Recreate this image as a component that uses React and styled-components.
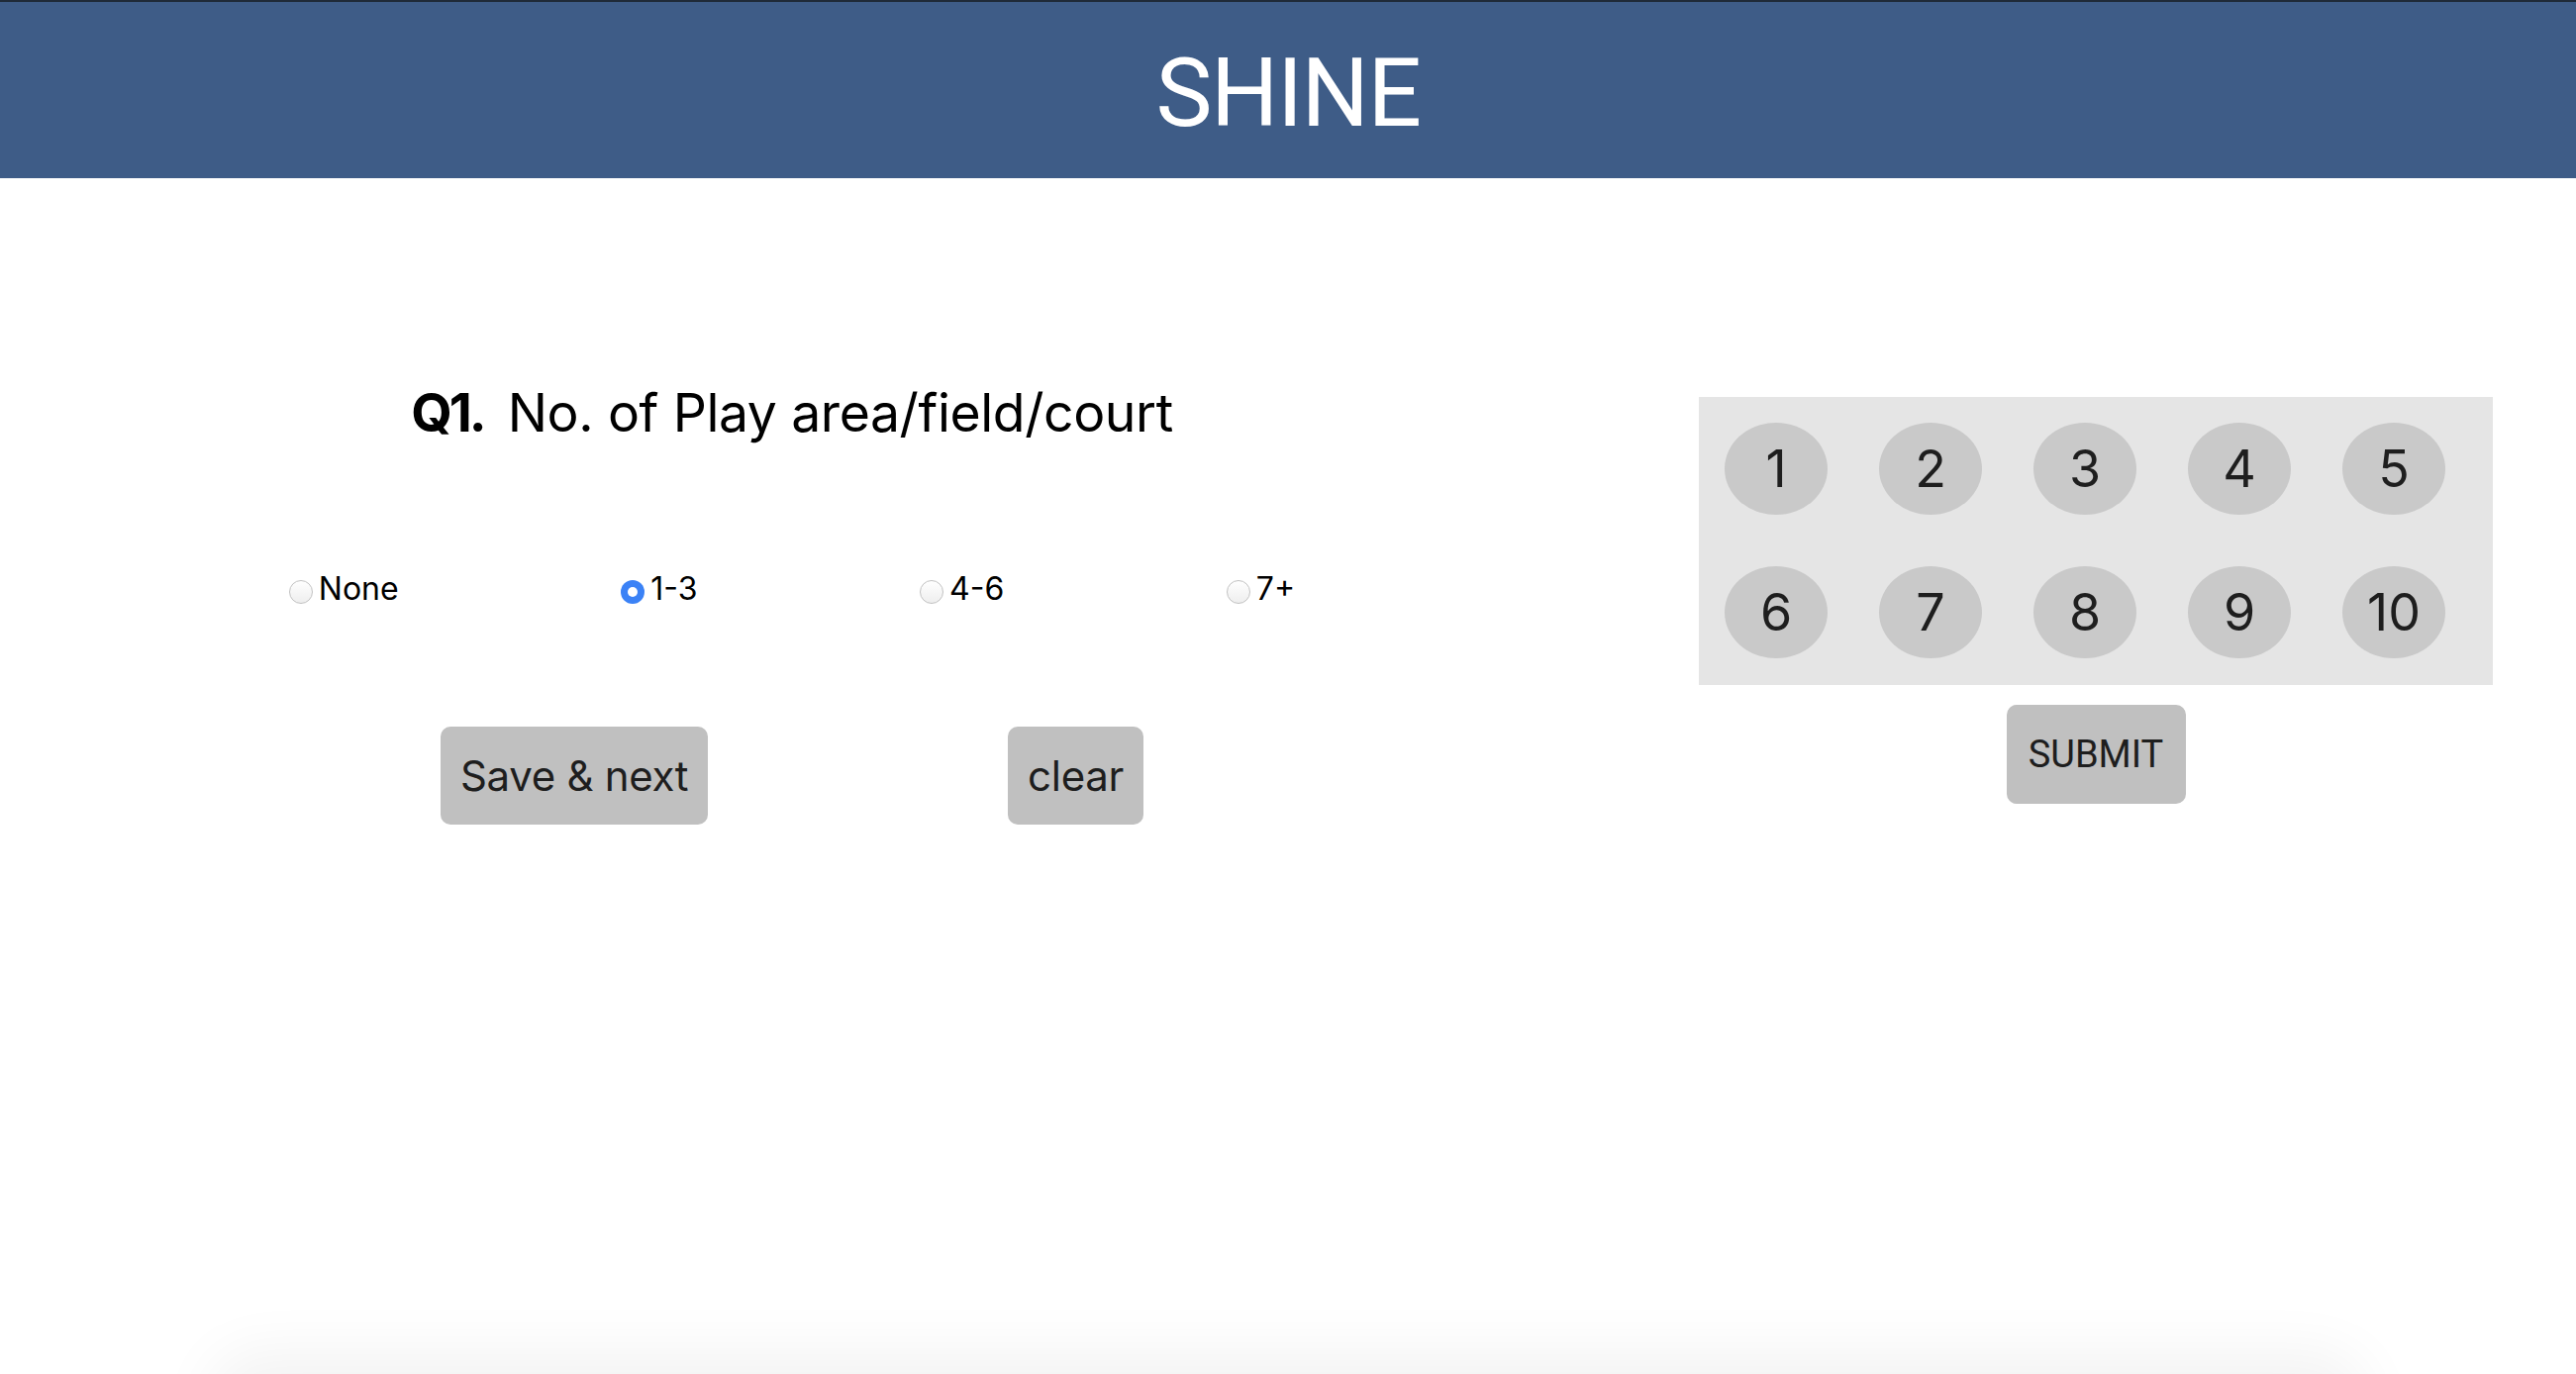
import React, { useState } from 'react'
import styled, { createGlobalStyle } from 'styled-components'

const GlobalStyle = createGlobalStyle`
  html, body {
    margin: 0;
    padding: 0;
    background: #ffffff;
    font-family: Inter, "Open Sans", sans-serif;
    color: #000;
    overflow: hidden;
  }
`

const Page = styled.div`
  width: 2602px;
`

const Header = styled.header`
  height: 178px;
  border-top: 2px solid #1f2a38;
  background: #3e5c87;
  display: flex;
  align-items: center;
  justify-content: center;
`

const Title = styled.h1`
  margin: 6px 0 0;
  font-family: Roboto, "Liberation Sans", sans-serif;
  font-weight: 400;
  font-size: 96px;
  line-height: 1;
  color: #ffffff;
  letter-spacing: -1.5px;
`

const Main = styled.main`
  height: 1215px;
  display: flex;
  align-items: flex-start;
`

const QuestionColumn = styled.section`
  width: 1600px;
  display: flex;
  flex-direction: column;
  align-items: center;
  padding-top: 205px;
`

const Question = styled.h2`
  margin: 0;
  font-size: 53.5px;
  line-height: 64px;
  font-weight: 400;
  letter-spacing: -0.4px;
  display: flex;
  gap: 24px;
`

const QNumber = styled.span`
  font-weight: 700;
  letter-spacing: -3px;
`

const Options = styled.div`
  width: 1241px;
  margin-top: 128px;
  display: flex;
  justify-content: space-around;
  align-items: center;
  height: 36px;
`

const Option = styled.label`
  display: flex;
  align-items: center;
  gap: 6px;
  font-size: 32px;
  line-height: 36px;
  cursor: pointer;
`

const Radio = styled.input`
  appearance: none;
  margin: 0;
  width: 24px;
  height: 24px;
  border-radius: 50%;
  border: 1px solid #c2c2c2;
  background: linear-gradient(#ffffff, #eeeeee);
  box-sizing: border-box;
  position: relative;
  top: 3px;

  &:checked {
    border: none;
    background: #3b82f6;
  }

  &:checked::after {
    content: '';
    position: absolute;
    left: 7px;
    top: 7px;
    width: 10px;
    height: 10px;
    border-radius: 50%;
    background: #ffffff;
  }
`

const Actions = styled.div`
  width: 1013px;
  margin-top: 121px;
  display: flex;
  justify-content: space-around;
`

const GreyButton = styled.button`
  height: 99px;
  padding: 0 20px;
  border: none;
  border-radius: 10px;
  background: #c0c0c0;
  color: #1e1e1e;
  font-family: Inter, "Open Sans", sans-serif;
  font-size: 42px;
  letter-spacing: -0.3px;
  cursor: pointer;
`

const PadColumn = styled.aside`
  margin-left: 116px;
  padding-top: 221px;
  width: 802px;
  display: flex;
  flex-direction: column;
  align-items: center;
`

const Pad = styled.div`
  width: 802px;
  height: 291px;
  background: #e5e5e5;
  display: grid;
  grid-template-columns: repeat(5, 156px);
  align-content: start;
`

const Bubble = styled.button`
  width: 104px;
  height: 93px;
  margin: 26px;
  border: none;
  border-radius: 50%;
  background: #c9c9c9;
  color: #1e1e1e;
  font-family: Inter, "Open Sans", sans-serif;
  font-size: 52px;
  padding: 0;
  cursor: pointer;
`

const SubmitButton = styled.button`
  margin-top: 20px;
  width: 181px;
  height: 100px;
  border: none;
  border-radius: 10px;
  background: #c0c0c0;
  color: #1e1e1e;
  font-family: Roboto, "Liberation Sans", sans-serif;
  font-size: 38px;
  cursor: pointer;
`

const FooterCard = styled.footer`
  margin: 0 auto;
  width: 2160px;
  height: 200px;
  border-radius: 40px;
  background: #f3f3f3;
  box-shadow: 0 -20px 60px 10px rgba(0, 0, 0, 0.05);
`

const choices = ['None', '1-3', '4-6', '7+']

export default function App() {
  const [value, setValue] = useState('1-3')

  return (
    <Page>
      <GlobalStyle />
      <Header>
        <Title>SHINE</Title>
      </Header>
      <Main>
        <QuestionColumn>
          <Question>
            <QNumber>Q1.</QNumber>
            <span>No. of Play area/field/court</span>
          </Question>
          <Options>
            {choices.map(c => (
              <Option key={c}>
                <Radio
                  type='radio'
                  name='q1'
                  checked={value === c}
                  onChange={() => setValue(c)}
                />
                {c}
              </Option>
            ))}
          </Options>
          <Actions>
            <GreyButton>Save &amp; next</GreyButton>
            <GreyButton>clear</GreyButton>
          </Actions>
        </QuestionColumn>
        <PadColumn>
          <Pad>
            {Array.from({ length: 10 }, (_, i) => (
              <Bubble key={i}>{i + 1}</Bubble>
            ))}
          </Pad>
          <SubmitButton>SUBMIT</SubmitButton>
        </PadColumn>
      </Main>
      <FooterCard />
    </Page>
  )
}
